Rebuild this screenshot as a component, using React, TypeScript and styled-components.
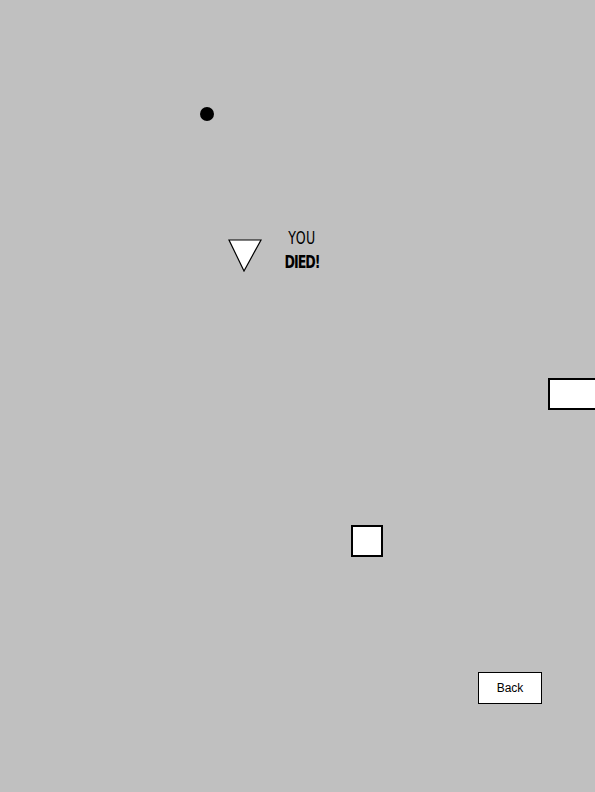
import React from 'react';
import styled, { createGlobalStyle } from 'styled-components';

const GlobalStyle = createGlobalStyle`
  html, body {
    margin: 0;
    padding: 0;
    background: #c0c0c0;
  }
`;

const Stage = styled.div`
  position: relative;
  width: 595px;
  height: 792px;
  overflow: hidden;
  background: #c0c0c0;
  font-family: 'Liberation Sans', Arial, sans-serif;
`;

// things on the board are placed by their game coordinates
const Sprite = styled.div<{ $x: number; $y: number }>`
  position: absolute;
  left: ${(p) => p.$x}px;
  top: ${(p) => p.$y}px;
`;

const Ball = styled(Sprite)`
  width: 14px;
  height: 14px;
  border-radius: 50%;
  background: #000;
`;

const Block = styled(Sprite)<{ $w: number; $h: number }>`
  box-sizing: border-box;
  width: ${(p) => p.$w}px;
  height: ${(p) => p.$h}px;
  background: #fff;
  border: 2px solid #000;
`;

const Message = styled(Sprite)`
  display: flex;
  flex-direction: column;
  align-items: center;
  width: 36px;
  font-family: 'DejaVu Sans Condensed', 'Liberation Sans', sans-serif;
  font-size: 14px;
  line-height: 24px;
  color: #000;
`;

const Line = styled.span<{ $bold?: boolean }>`
  display: block;
  font-weight: ${(p) => (p.$bold ? 'bold' : 'normal')};
  letter-spacing: ${(p) => (p.$bold ? '-1px' : '0.5px')};
  transform: scaleY(1.2);
`;

const BackButton = styled.button`
  position: absolute;
  left: 478px;
  top: 672px;
  width: 64px;
  height: 32px;
  box-sizing: border-box;
  background: #fff;
  border: 1px solid #000;
  border-radius: 0;
  padding: 0;
  font-family: 'Liberation Sans', Arial, sans-serif;
  font-size: 12px;
  color: #000;
  cursor: pointer;
`;

const Player = ({ x, y }: { x: number; y: number }) => (
  <Sprite $x={x} $y={y}>
    <svg width="34" height="33" viewBox="0 0 34 33">
      <polygon points="1,1 33,1 16,32" fill="#fff" stroke="#000" strokeWidth="1.2" />
    </svg>
  </Sprite>
);

const App = () => {
  return (
    <>
      <GlobalStyle />
      <Stage>
        <Ball $x={200} $y={107} />
        <Player x={228} y={239} />
        <Message $x={284} $y={226}>
          <Line>YOU</Line>
          <Line $bold>DIED!</Line>
        </Message>
        <Block $x={548} $y={378} $w={60} $h={32} />
        <Block $x={351} $y={525} $w={32} $h={32} />
        <BackButton>Back</BackButton>
      </Stage>
    </>
  );
};

export default App;
